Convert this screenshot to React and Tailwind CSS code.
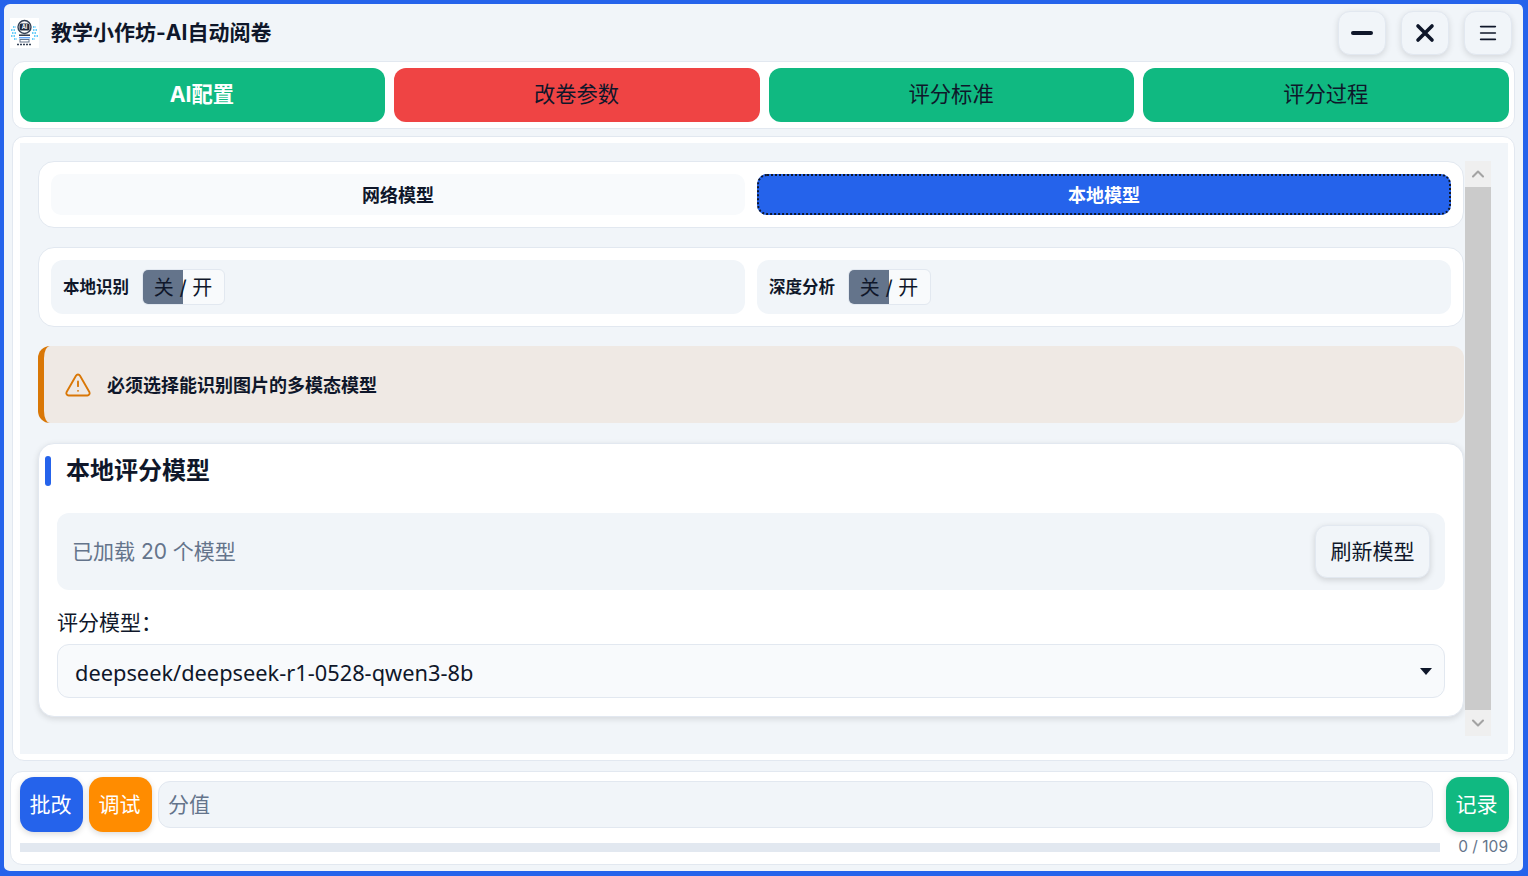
import React from "react";
import { Menu, TriangleAlert, ChevronUp, ChevronDown } from "lucide-react";

const font = "font-['Inter','Noto_Sans_CJK_SC',sans-serif]";

function Logo() {
  return (
    <svg width="29" height="30" viewBox="0 0 29 30" className="shrink-0 bg-white">
      <circle cx="14.5" cy="9" r="6.5" fill="none" stroke="#334155" strokeWidth="1.4" />
      <rect x="9.5" y="5.5" width="10" height="7" rx="1.5" fill="#1e293b" />
      <text x="14.5" y="11" fontSize="5.5" fontWeight="700" fill="#fff" textAnchor="middle">AI</text>
      <rect x="9" y="16.5" width="11" height="1.4" fill="#1e293b" />
      <rect x="9" y="19" width="11" height="1.4" fill="#60a5fa" />
      <rect x="10" y="21.5" width="9" height="2.5" fill="none" stroke="#64748b" strokeWidth="1" />
      <path d="M7 26.5h15" stroke="#334155" strokeWidth="1.6" strokeDasharray="2 1" />
      <path d="M3 9h3M1 12h5M2 15h5M1 18h4M4 21h3M23 9h3M23 12h5M22 15h5M24 18h4M22 21h3" stroke="#38bdf8" strokeWidth="1.6" strokeDasharray="1.5 1" />
    </svg>
  );
}

function WinButton({ children }) {
  return (
    <button className="w-12 h-[44px] flex items-center justify-center rounded-[12px] bg-[#f1f5f9] border border-[#e2e8f0] shadow-[0_2px_6px_rgba(0,0,0,0.12)] text-[#0f172a]">
      {children}
    </button>
  );
}

function TopTab({ label, color, bold }) {
  return (
    <button className={`flex-1 h-[54px] pr-[1px] rounded-[12px] text-[21.3px] ${color} ${bold ? "font-bold text-white" : "text-[#0f172a]"}`}>
      {label}
    </button>
  );
}

function Toggle({ label }) {
  return (
    <div className="flex-1 h-[54px] flex items-center gap-[13px] px-3 rounded-[12px] bg-[#f1f5f9]">
      <span className="text-[16.5px] font-bold text-[#0f172a] pt-[1px]">{label}</span>
      <div className="relative h-[36px] w-[83px] pr-[1px] rounded-[6px] border border-[#e2e8f0] bg-[#f8fafc] overflow-hidden flex items-center justify-center text-[20px] text-[#0f172a]">
        <div className="absolute left-0 top-0 h-full w-[40px] bg-[#64748b]" />
        <span className="relative pt-[2px]">关 / 开</span>
      </div>
    </div>
  );
}

function Scrollbar() {
  return (
    <div className="w-[26px] shrink-0 flex flex-col">
      <div className="h-[26px] bg-[#efefef] flex items-center justify-center text-[#a3a3a3]">
        <ChevronUp size={20} strokeWidth={2.5} />
      </div>
      <div className="flex-1 bg-[#cbcbcb]" />
      <div className="h-[26px] bg-[#efefef] flex items-center justify-center text-[#a3a3a3]">
        <ChevronDown size={20} strokeWidth={2.5} />
      </div>
    </div>
  );
}

export default function App() {
  return (
    <div className={`h-[876px] w-[1528px] overflow-hidden bg-[#2563eb] ${font}`}>
      <div className="h-full border-t-[4px] border-l-[4px] border-r-[5px] border-b-[5px] border-[#2563eb] rounded-[10px] bg-[#f1f5f9] flex flex-col">
        {/* Title bar */}
        <div className="h-[57px] shrink-0 flex items-center pl-[6px] pr-[11px]">
          <Logo />
          <h1 className="ml-[12px] text-[21px] font-bold text-[#0f172a]">教学小作坊-AI自动阅卷</h1>
          <div className="ml-auto flex gap-[15px]">
            <WinButton><span className="w-[22px] h-[4px] rounded-full bg-[#0f172a]" /></WinButton>
            <WinButton>
              <svg width="22" height="22" viewBox="0 0 22 22"><path d="M4 4l14 14M18 4L4 18" stroke="#0f172a" strokeWidth="3.6" strokeLinecap="round" /></svg>
            </WinButton>
            <WinButton><Menu size={22} strokeWidth={1.8} /></WinButton>
          </div>
        </div>

        {/* Top tabs */}
        <div className="mx-[8px] h-[68px] shrink-0 flex items-center gap-[9px] pl-[6.6px] pr-[5px] rounded-[12px] bg-white border border-[#e2e8f0]">
          <TopTab label="AI配置" color="bg-[#10b981]" bold />
          <TopTab label="改卷参数" color="bg-[#ef4444]" />
          <TopTab label="评分标准" color="bg-[#10b981]" />
          <TopTab label="评分过程" color="bg-[#10b981]" />
        </div>

        {/* Main panel */}
        <div className="mx-[8px] mt-[7px] h-[625px] shrink-0 pl-[6px] pr-[6px] py-[6px] rounded-[12px] bg-white border border-[#e2e8f0]">
          <div className="h-full flex bg-[#f1f5f9] ml-[1px] pl-[18px] pr-[17px] pt-[18px] pb-[18px]">
            <div className="flex-1 min-w-0 flex flex-col mr-[1px]">
              <div className="h-[67px] flex items-center gap-3 px-3 rounded-[16px] bg-white border border-[#e2e8f0]">
                <button className="flex-1 h-[41px] rounded-[10px] bg-[#f8fafc] text-[18px] font-bold text-[#0f172a] pt-[1px]">网络模型</button>
                <button className="flex-1 h-[41px] rounded-[10px] bg-[#2563eb] text-[18px] font-bold text-white pt-[1px] outline-dotted outline-2 -outline-offset-2 outline-[#0f172a]">本地模型</button>
              </div>

              <div className="mt-[19px] h-[80px] flex items-center gap-3 px-3 rounded-[16px] bg-white border border-[#e2e8f0]">
                <Toggle label="本地识别" />
                <Toggle label="深度分析" />
              </div>

              <div className="mt-[19px] h-[77px] flex items-center gap-[15px] pl-[20px] rounded-[12px] bg-[#efe9e4] border-l-[6px] border-[#d97706]">
                <TriangleAlert size={28} strokeWidth={1.6} className="text-[#d97706]" />
                <span className="text-[18px] font-bold text-[#0f172a] pt-[1px]">必须选择能识别图片的多模态模型</span>
              </div>

              <div className="mt-[20px] h-[274px] rounded-[16px] bg-white border border-[#e2e8f0] shadow-[0_2px_6px_rgba(0,0,0,0.12)] pl-[6px] pr-[18px] pt-[11px]">
                <div className="flex items-center gap-[15px] h-[32px]">
                  <span className="w-[6px] h-[30px] rounded-full bg-[#2563eb]" />
                  <h2 className="text-[24px] font-bold text-[#0f172a]">本地评分模型</h2>
                </div>
                <div className="ml-[12px] mt-[26px] h-[77px] flex items-center justify-between pl-[15px] pr-[15px] rounded-[12px] bg-[#f1f5f9]">
                  <span className="text-[21px] text-[#64748b]">已加载 20 个模型</span>
                  <button className="w-[115px] h-[53px] rounded-[12px] bg-[#f1f5f9] border border-[#e2e8f0] shadow-[0_2px_6px_rgba(0,0,0,0.15)] text-[21px] text-[#0f172a]">刷新模型</button>
                </div>
                <div className="ml-[12px] mt-[18px] text-[21px] leading-[30px] text-[#0f172a]">评分模型：</div>
                <div className="ml-[12px] mt-[6px] h-[54px] flex items-center justify-between pl-[17px] pr-[12px] rounded-[12px] bg-[#f8fafc] border border-[#e2e8f0]">
                  <span className="font-['Noto_Sans',sans-serif] text-[21.8px] leading-[30px] pt-[4px] text-[#0f172a]">deepseek/deepseek-r1-0528-qwen3-8b</span>
                  <svg width="12" height="7" viewBox="0 0 12 7" className="mt-[1px]"><path d="M0 0h12L6 7z" fill="#0f172a" /></svg>
                </div>
              </div>
            </div>
            <Scrollbar />
          </div>
        </div>

        {/* Bottom bar */}
        <div className="ml-[6px] mr-[5px] mt-[10px] h-[94px] shrink-0 pl-[9px] pr-[8px] pt-[5px] rounded-[12px] bg-white border border-[#e2e8f0]">
          <div className="flex items-center h-[55px]">
            <button className="w-[63px] h-[55px] pr-[2px] rounded-[14px] bg-[#2563eb] text-[21px] text-white shadow-[0_2px_6px_rgba(0,0,0,0.15)]">批改</button>
            <button className="ml-[6px] w-[63px] h-[55px] pr-[2px] rounded-[14px] bg-[#ff8c00] text-[21px] text-white shadow-[0_2px_6px_rgba(0,0,0,0.15)]">调试</button>
            <div className="ml-[6px] flex-1 h-[47px] flex items-center pl-[9px] rounded-[12px] bg-[#f1f5f9] border border-[#e2e8f0] text-[21px] text-[#64748b]">分值</div>
            <button className="ml-[13px] w-[63px] h-[55px] pr-[2px] rounded-[14px] bg-[#10b981] text-[21px] text-white shadow-[0_2px_6px_rgba(0,0,0,0.15)]">记录</button>
          </div>
          <div className="flex items-center mt-[5px]">
            <div className="w-[1420px] h-[9px] bg-[#e2e8f0]" />
            <span className="ml-auto mr-[1px] text-[15.5px] leading-[20px] text-[#64748b]">0 / 109</span>
          </div>
        </div>
      </div>
    </div>
  );
}
